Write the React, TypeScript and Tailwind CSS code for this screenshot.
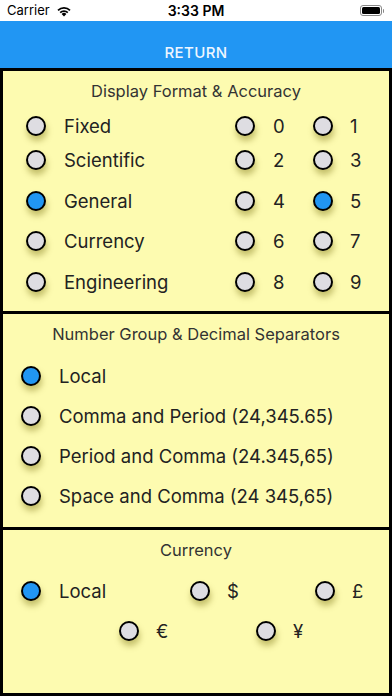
import React from "react";

const FONT = { fontFamily: "Inter, 'Liberation Sans', sans-serif" };

function Radio({ on }: { on?: boolean }) {
  return (
    <span
      className={
        "inline-block h-[20px] w-[20px] shrink-0 rounded-full border-2 border-black shadow-[1px_5px_6px_rgba(110,100,0,0.4)] " +
        (on ? "bg-[#2196f3]" : "bg-[#dedde2]")
      }
    />
  );
}

function Option({ label, on, gap = "gap-[18px]" }: { label: string; on?: boolean; gap?: string }) {
  return (
    <div className={"flex items-center " + gap}>
      <Radio on={on} />
      <span className="whitespace-nowrap text-[18.5px] leading-none text-[#222]">{label}</span>
    </div>
  );
}

const formats = [
  { label: "Fixed", mt: "mt-0", a: "0", b: "1" },
  { label: "Scientific", mt: "mt-0", a: "2", b: "3" },
  { label: "General", mt: "mt-[7px]", a: "4", b: "5", on: true, bOn: true },
  { label: "Currency", mt: "mt-[6px]", a: "6", b: "7" },
  { label: "Engineering", mt: "mt-[7px]", a: "8", b: "9" },
];

const separators = [
  { label: "Local", on: true },
  { label: "Comma and Period (24,345.65)" },
  { label: "Period and Comma (24.345,65)" },
  { label: "Space and Comma (24 345,65)" },
];

function Title({ children }: { children: React.ReactNode }) {
  return (
    <div className="pt-[10px] text-center text-[16.5px] leading-[20px] text-[#333]">{children}</div>
  );
}

export default function App() {
  return (
    <div className="flex h-[696px] w-[392px] flex-col bg-white" style={FONT}>
      {/* status bar */}
      <div className="relative flex h-[21px] items-center px-[7px] text-black">
        <div className="flex items-center gap-[6px]">
          <span className="text-[13px] leading-none">Carrier</span>
          <svg width="16" height="12" viewBox="0 0 16 12">
            <path d="M8 11.5 L5.6 9 A3.4 3.4 0 0 1 10.4 9 Z" fill="black" />
            <path d="M3.6 7 A6.3 6.3 0 0 1 12.4 7 L11.2 8.2 A4.6 4.6 0 0 0 4.8 8.2 Z" fill="black" />
            <path d="M1.4 4.8 A9.4 9.4 0 0 1 14.6 4.8 L13.4 6 A7.7 7.7 0 0 0 2.6 6 Z" fill="black" />
          </svg>
        </div>
        <span className="absolute left-0 right-0 text-center text-[14px] font-semibold leading-none">3:33 PM</span>
        <div className="ml-auto flex items-center gap-[1px] pr-[1px]">
          <span className="flex h-[11px] w-[22px] items-center rounded-[3px] border border-[#888] p-[1px]">
            <span className="h-full w-full rounded-[1.5px] bg-black" />
          </span>
          <span className="h-[4px] w-[1.5px] rounded-r bg-[#888]" />
        </div>
      </div>

      {/* return bar */}
      <div className="flex h-[47px] items-end justify-center bg-[#2196f3] pb-[6px]">
        <span className="text-[15px] font-medium leading-[18px] tracking-[0.4px] text-[#eef6ff]">RETURN</span>
      </div>

      <div className="flex flex-1 flex-col border-[3px] border-black bg-[#fdfbb0]">
        {/* display format */}
        <div className="h-[243px] shrink-0 border-b-[3px] border-black">
          <Title>Display Format &amp; Accuracy</Title>
          <div className="mt-[8px] pl-[23px]">
            {formats.map((f) => (
              <div key={f.label} className={"grid h-[34px] grid-cols-[209px_78px_auto] items-center " + f.mt}>
                <Option label={f.label} on={f.on} />
                <Option label={f.a} />
                <Option label={f.b} on={f.bOn} gap="gap-[17px]" />
              </div>
            ))}
          </div>
        </div>

        {/* separators */}
        <div className="h-[216px] shrink-0 border-b-[3px] border-black">
          <Title>Number Group &amp; Decimal Separators</Title>
          <div className="mt-[12px] pl-[18px]">
            {separators.map((s) => (
              <div key={s.label} className="flex h-[40px] items-center">
                <Option label={s.label} on={s.on} />
              </div>
            ))}
          </div>
        </div>

        {/* currency */}
        <div className="flex-1">
          <Title>Currency</Title>
          <div className="mt-[11px] flex h-[40px] items-center pl-[18px]">
            <div className="w-[169px]">
              <Option label="Local" on />
            </div>
            <div className="w-[125px]">
              <Option label="$" gap="gap-[17px]" />
            </div>
            <Option label="£" gap="gap-[17px]" />
          </div>
          <div className="flex h-[40px] items-center pl-[116px]">
            <div className="w-[137px]">
              <Option label="€" gap="gap-[17px]" />
            </div>
            <Option label="¥" gap="gap-[17px]" />
          </div>
        </div>
      </div>
    </div>
  );
}
